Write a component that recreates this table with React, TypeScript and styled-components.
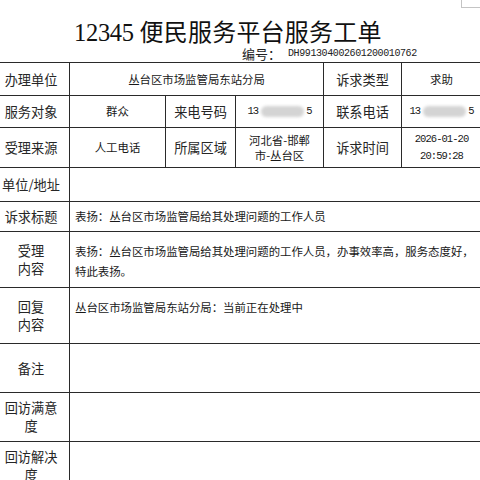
import React from "react";
import styled, { createGlobalStyle } from "styled-components";

const Global = createGlobalStyle`
  html, body { margin: 0; padding: 0; background: #fff; overflow: hidden; }
  body { font-family: "Noto Sans CJK SC", "Liberation Sans", sans-serif; color: #141414; }
`;

const Page = styled.div`
  position: relative;
  width: 480px;
  height: 480px;
  overflow: hidden;
  background: #fff;
`;

const CornerMark = styled.div`
  position: absolute;
  top: 0;
  right: 0;
  width: 18px;
  height: 7px;
  border-left: 1px solid #c4c4c4;
  border-bottom: 1px solid #c4c4c4;
`;

const Header = styled.header`
  padding-top: 12px;
  display: flex;
  flex-direction: column;
`;

const Title = styled.h1`
  margin: 0;
  padding-left: 74px;
  height: 30px;
  line-height: 30px;
  font-weight: 400;
  white-space: nowrap;
  color: #111;
`;

const TitleNum = styled.span`
  font-family: "Liberation Serif", serif;
  font-size: 24.5px;
  letter-spacing: -0.3px;
`;

const TitleText = styled.span`
  font-family: "Noto Sans CJK SC", sans-serif;
  font-size: 24px;
  letter-spacing: 0.2px;
`;

const SerialRow = styled.div`
  margin-top: 5px;
  padding-left: 242px;
  height: 14px;
  line-height: 14px;
  display: flex;
  align-items: center;
  white-space: nowrap;
`;

const SerialLabel = styled.span`
  font-size: 13px;
  width: 46px;
  color: #222;
`;

const SerialValue = styled.span`
  font-family: "Liberation Mono", monospace;
  font-size: 10px;
  letter-spacing: -0.4px;
  color: #222;
`;

const Sheet = styled.div`
  margin-top: 1px;
  margin-left: -8px;
  display: grid;
  grid-template-columns: 77px 96px 70px 88px 78px 80px;
  grid-template-rows: 33px 32px 40px 34px 30px 56px 56px 49px 49px 49px;
  border-top: 1px solid #2a2a2a;
  border-left: 1px solid #2a2a2a;
  width: 490px;
`;

const Cell = styled.div<{ $span?: number; $align?: "center" | "left"; $top?: boolean; $lh?: number; $fs?: number }>`
  grid-column: span ${(p) => p.$span ?? 1};
  border-right: 1px solid #2a2a2a;
  border-bottom: 1px solid #2a2a2a;
  box-sizing: border-box;
  display: flex;
  flex-direction: column;
  justify-content: ${(p) => (p.$top ? "flex-start" : "center")};
  align-items: ${(p) => (p.$align === "left" ? "flex-start" : "center")};
  text-align: ${(p) => (p.$align === "left" ? "left" : "center")};
  padding: ${(p) => (p.$top ? "9px 5px 0 5px" : "0 5px")};
  font-size: ${(p) => p.$fs ?? 11.4}px;
  line-height: ${(p) => p.$lh ?? 17}px;
  white-space: nowrap;
  overflow: hidden;
  color: #181818;
`;

const Label = styled(Cell).attrs({ $fs: 13.2 })`
  color: #262626;
`;

const Mono = styled.span`
  font-family: "Liberation Mono", monospace;
  font-size: 10.5px;
  letter-spacing: -0.95px;
`;

const Phone = styled.span`
  display: inline-flex;
  align-items: center;
  font-family: "Liberation Mono", monospace;
  font-size: 10.5px;
  letter-spacing: -0.95px;
`;

const Blur = styled.span<{ $w: number }>`
  display: inline-block;
  width: ${(p) => p.$w}px;
  height: 11px;
  margin: 0 2px 0 3px;
  border-radius: 6px;
  background: #d4d4d4;
  filter: blur(1.6px);
`;

const MaskedPhone = ({ w }: { w: number }) => (
  <Phone>
    13
    <Blur $w={w} />
    5
  </Phone>
);

export default function App() {
  return (
    <Page>
      <Global />
      <CornerMark />
      <Header>
        <Title>
          <TitleNum>12345 </TitleNum>
          <TitleText>便民服务平台服务工单</TitleText>
        </Title>
        <SerialRow>
          <SerialLabel>编号：</SerialLabel>
          <SerialValue>DH991304002601200010762</SerialValue>
        </SerialRow>
      </Header>
      <Sheet>
        <Label>办理单位</Label>
        <Cell $span={3}>丛台区市场监管局东站分局</Cell>
        <Label>诉求类型</Label>
        <Cell>求助</Cell>

        <Label>服务对象</Label>
        <Cell>群众</Cell>
        <Label>来电号码</Label>
        <Cell>
          <MaskedPhone w={43} />
        </Cell>
        <Label>联系电话</Label>
        <Cell>
          <MaskedPhone w={43} />
        </Cell>

        <Label>受理来源</Label>
        <Cell>人工电话</Cell>
        <Label>所属区域</Label>
        <Cell $lh={15}>
          河北省-邯郸
          <br />
          市-丛台区
        </Cell>
        <Label>诉求时间</Label>
        <Cell $lh={17}>
          <Mono>2026-01-20</Mono>
          <Mono>20:59:28</Mono>
        </Cell>

        <Label>单位/地址</Label>
        <Cell $span={5} $align="left" />

        <Label>诉求标题</Label>
        <Cell $span={5} $align="left">
          表扬：丛台区市场监管局给其处理问题的工作人员
        </Cell>

        <Label $lh={17.5}>
          受理
          <br />
          内容
        </Label>
        <Cell $span={5} $align="left" $top $lh={20}>
          表扬：丛台区市场监管局给其处理问题的工作人员，办事效率高，服务态度好，
          <br />
          特此表扬。
        </Cell>

        <Label $lh={17.5}>
          回复
          <br />
          内容
        </Label>
        <Cell $span={5} $align="left" $top $lh={20}>
          丛台区市场监管局东站分局：当前正在处理中
        </Cell>

        <Label>备注</Label>
        <Cell $span={5} />

        <Label $lh={18.5}>
          回访满意
          <br />
          度
        </Label>
        <Cell $span={5} />

        <Label $lh={18.5}>
          回访解决
          <br />
          度
        </Label>
        <Cell $span={5} />
      </Sheet>
    </Page>
  );
}
